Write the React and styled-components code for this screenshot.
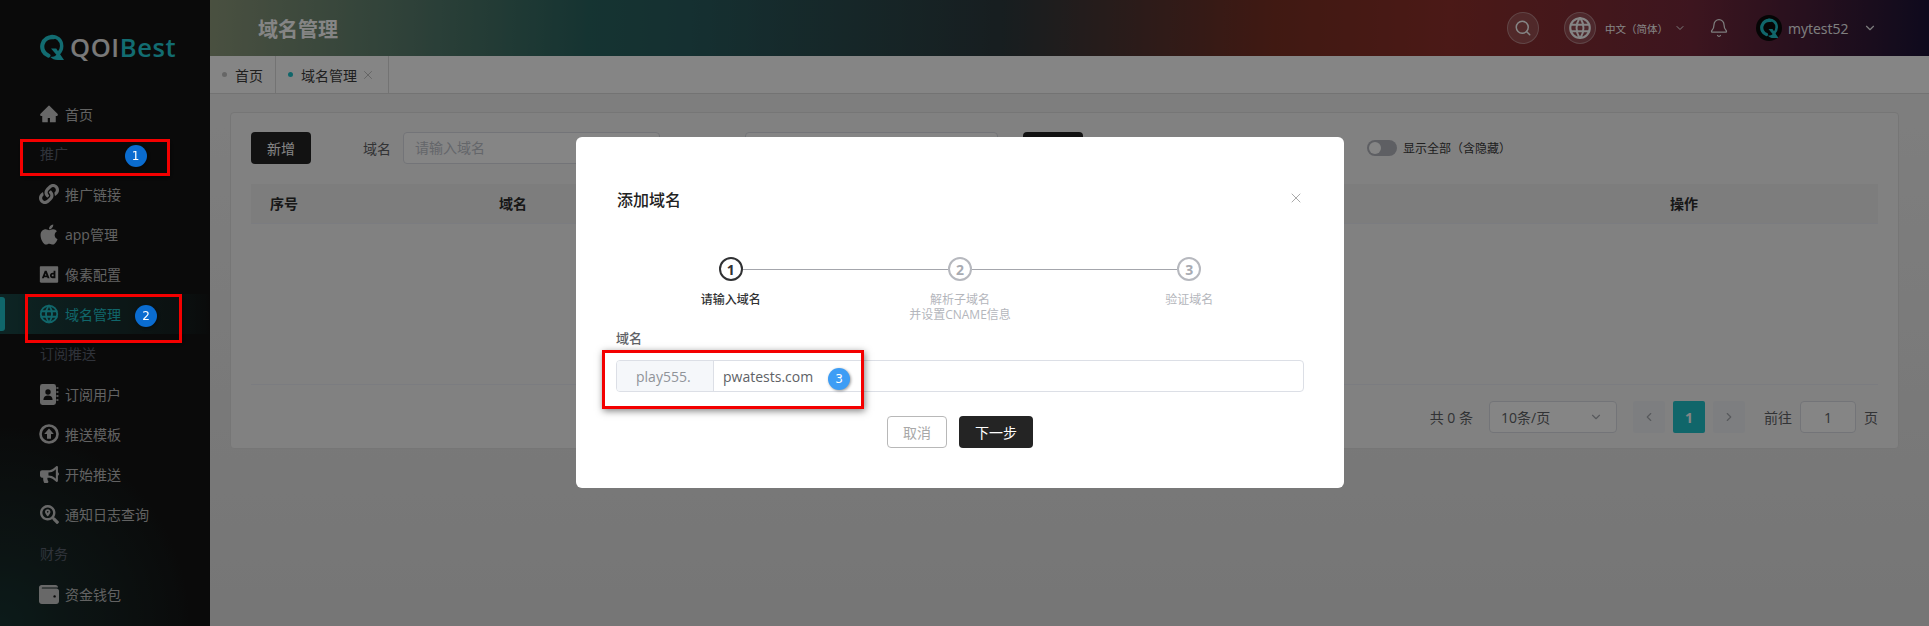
import React from 'react';
import styled, { createGlobalStyle } from 'styled-components';
import { Search, Bell, ChevronDown, ChevronLeft, ChevronRight, X } from 'lucide-react';
import { AiFillHome } from 'react-icons/ai';
import { FaLink, FaApple, FaBullhorn, FaSearchLocation } from 'react-icons/fa';
import { RiAdvertisementFill } from 'react-icons/ri';
import { TbWorld } from 'react-icons/tb';

const GlobalStyle = createGlobalStyle`
  html, body {
    margin: 0;
    height: 100%;
    overflow: hidden;
    background: #eee;
  }
  * {
    box-sizing: border-box;
  }
  body {
    font-family: "Open Sans", "Noto Sans CJK SC", sans-serif;
    font-size: 14px;
    color: #606266;
  }
`;

const Page = styled.div`
  display: flex;
  height: 626px;
  overflow: hidden;
`;

const Sidebar = styled.aside`
  width: 210px;
  flex: none;
  background:
    radial-gradient(ellipse 190px 200px at 0 100%, rgba(28, 88, 84, 0.45), transparent),
    #151515;
  overflow: hidden;
`;

const Logo = styled.div`
  display: flex;
  align-items: center;
  height: 94px;
  padding: 0 0 0 40px;
`;

const LogoText = styled.span`
  margin-left: 6px;
  font-family: "Open Sans", sans-serif;
  font-size: 25.5px;
  font-weight: 600;
  letter-spacing: 0.6px;
  color: #e8e8e8;

  b {
    font-weight: 600;
    color: #24d0d8;
  }
`;

const GroupLabel = styled.div`
  height: 40px;
  padding-left: 40px;
  line-height: 39px;
  font-size: 14px;
  color: #5c6270;
`;

const NavItem = styled.div`
  position: relative;
  display: flex;
  align-items: center;
  height: 40px;
  padding-left: 38px;
  gap: 5px;
  color: ${({ $active }) => ($active ? '#20c4cc' : '#bcbcbc')};
  background: ${({ $active }) =>
    $active ? 'linear-gradient(90deg, rgba(30, 120, 118, 0.5), rgba(30, 120, 118, 0.12) 85%, transparent)' : 'none'};

  &::before {
    content: ${({ $active }) => ($active ? '""' : 'none')};
    position: absolute;
    left: 0;
    top: 3px;
    width: 5px;
    height: 34px;
    border-radius: 0 3px 3px 0;
    background: #20c4cc;
  }
`;

const NavIcon = styled.span`
  display: flex;
  align-items: center;
  justify-content: center;
  width: 22px;
  height: 22px;
  font-size: ${({ $size }) => $size || 20}px;
  color: ${({ $active }) => ($active ? '#20c4cc' : '#c8c8c8')};
`;

const Main = styled.main`
  flex: 1;
  min-width: 0;
  display: flex;
  flex-direction: column;
`;

const Header = styled.header`
  display: flex;
  align-items: center;
  height: 56px;
  flex: none;
  padding: 0 52px 0 48px;
  background: linear-gradient(
    92deg,
    #8e9a7c 0%,
    #2a6460 22%,
    #2a5c5e 28%,
    #2c3a3e 46%,
    #7c3024 62%,
    #90302c 72%,
    #762a3c 86%,
    #1c1438 100%
  );
`;

const PageTitle = styled.h1`
  flex: 1;
  margin: 0;
  font-size: 20px;
  font-weight: 700;
  color: #fff;
`;

const RoundButton = styled.span`
  display: flex;
  align-items: center;
  justify-content: center;
  width: 32px;
  height: 32px;
  border-radius: 50%;
  background: rgba(255, 255, 255, 0.16);
  border: 1px solid rgba(255, 255, 255, 0.3);
  color: #fff;
  margin-right: ${({ $gap }) => $gap || 0}px;
`;

const LangText = styled.span`
  font-size: 10.5px;
  width: 60px;
  color: #fff;
  margin-right: 9px;
  white-space: nowrap;
`;

const HeaderIcon = styled.span`
  display: flex;
  color: #f0f0f0;
  margin-right: ${({ $gap }) => $gap || 0}px;
`;

const Avatar = styled.span`
  display: flex;
  align-items: center;
  justify-content: center;
  width: 26px;
  height: 26px;
  border-radius: 50%;
  background: #0a0a0a;
  margin-right: 6px;
`;

const UserName = styled.span`
  width: 75px;
  font-size: 14px;
  color: #f4f4f4;
`;

const Tabs = styled.nav`
  display: flex;
  height: 38px;
  flex: none;
  background: #fff;
  border-bottom: 1px solid #dcdcdc;
`;

const Tab = styled.div`
  display: flex;
  align-items: center;
  height: 37px;
  padding: 0 ${({ $closable }) => ($closable ? '13px' : '12px')} 0 12px;
  border-right: 1px solid #dcdcdc;
  color: #3c3c3c;
  font-size: 14px;
`;

const TabDot = styled.i`
  width: 5px;
  height: 5px;
  border-radius: 50%;
  margin-right: 8px;
  background: ${({ $active }) => ($active ? '#20c4cc' : '#c4c4c4')};
`;

const TabClose = styled.span`
  display: flex;
  margin-left: 4px;
  color: #a8a8a8;
`;

const Content = styled.section`
  flex: 1;
  padding: 18px 30px 0 20px;
  background: linear-gradient(180deg, #f2f2f2, #e2e2e2);
`;

const Card = styled.div`
  height: 337px;
  padding: 19px 20px;
  background: #f8f8f8;
  border: 1px solid #e2e2e2;
  border-radius: 4px;
`;

const Filters = styled.div`
  display: flex;
  align-items: center;
  height: 32px;
`;

const Button = styled.button`
  height: 32px;
  width: ${({ $w }) => $w || 60}px;
  margin: 0 0 0 ${({ $gap }) => $gap || 0}px;
  padding: 0;
  font: inherit;
  font-size: 14px;
  color: ${({ $plain }) => ($plain ? '#a8a8a8' : '#fff')};
  background: ${({ $plain }) => ($plain ? '#fff' : '#242424')};
  border: ${({ $plain }) => ($plain ? '1px solid #b8b8b8' : '0')};
  border-radius: 4px;
`;

const FilterLabel = styled.span`
  margin: 0 12px 0 ${({ $gap }) => $gap}px;
  color: #606266;
`;

const FilterInput = styled.div`
  width: ${({ $w }) => $w}px;
  height: 32px;
  padding: 0 11px;
  line-height: 30px;
  color: #c0c4cc;
  background: #fff;
  border: 1px solid #dcdfe6;
  border-radius: 4px;
`;

const Toggle = styled.span`
  display: flex;
  align-items: center;
  width: 30px;
  height: 16px;
  margin: 0 6px 0 284px;
  padding-left: 2px;
  border-radius: 8px;
  background: #b4b6be;

  &::before {
    content: "";
    width: 12px;
    height: 12px;
    border-radius: 50%;
    background: #fff;
  }
`;

const ToggleText = styled.span`
  font-size: 12px;
  white-space: nowrap;
  color: #3c3c3c;
`;

const TableHead = styled.div`
  display: grid;
  grid-template-columns: 229px 1171px 1fr;
  align-items: center;
  height: 40px;
  margin-top: 20px;
  padding: 0 0 2px 19px;
  font-weight: 700;
  font-size: 14px;
  color: #2c2c2c;
  background: #f0f0f0;
  border-bottom: 1px solid #ebeef5;
`;

const TableBody = styled.div`
  height: 161px;
  border-bottom: 1px solid #ebeef5;
`;

const Pagination = styled.div`
  display: flex;
  align-items: center;
  justify-content: flex-end;
  margin-top: 16px;
  height: 32px;
  color: #606266;
`;

const PageSize = styled.div`
  display: flex;
  align-items: center;
  justify-content: space-between;
  width: 128px;
  height: 32px;
  margin: 0 16px;
  padding: 0 13px 0 11px;
  border: 1px solid #dcdfe6;
  border-radius: 4px;
  background: #fff;
`;

const PageButton = styled.span`
  display: flex;
  align-items: center;
  justify-content: center;
  width: 32px;
  height: 32px;
  margin-right: 8px;
  border-radius: 2px;
  font-weight: 700;
  color: ${({ $active }) => ($active ? '#fff' : '#a8abb2')};
  background: ${({ $active }) => ($active ? '#20c4cc' : '#f0f2f5')};
`;

const GotoLabel = styled.span`
  margin-left: 11px;
`;

const GotoInput = styled.span`
  display: flex;
  align-items: center;
  justify-content: center;
  width: 56px;
  height: 32px;
  margin: 0 8px;
  border: 1px solid #dcdfe6;
  border-radius: 4px;
  background: #fff;
`;

const Overlay = styled.div`
  position: fixed;
  inset: 0;
  z-index: 10;
  padding: 137px 0 0 576px;
  background: rgba(0, 0, 0, 0.48);
`;

const Modal = styled.div`
  width: 768px;
  height: 351px;
  padding: 0 40px;
  border-radius: 6px;
  background: #fff;
`;

const ModalHead = styled.div`
  display: flex;
  align-items: center;
  justify-content: space-between;
  height: 22px;
  margin-top: 0;
  padding: 51px 0 0 1px;
  box-sizing: content-box;
`;

const ModalTitle = styled.h2`
  margin: 0;
  font-size: 16px;
  font-weight: 500;
  color: #222;
`;

const CloseIcon = styled.span`
  display: flex;
  margin: -2px 0 0 0;
  color: #8a8a8a;
`;

const Steps = styled.div`
  display: grid;
  grid-template-columns: repeat(3, 1fr);
  padding-top: 47px;
`;

const Step = styled.div`
  position: relative;
  display: flex;
  flex-direction: column;
  align-items: center;
  text-align: center;
  height: 66px;

  &:not(:last-child)::after {
    content: "";
    position: absolute;
    top: 11.5px;
    left: calc(50% + 12px);
    width: calc(100% - 24px);
    height: 1px;
    background: #a4a6ac;
  }
`;

const StepCircle = styled.span`
  display: flex;
  align-items: center;
  justify-content: center;
  width: 24px;
  height: 24px;
  border-radius: 50%;
  border: 2px solid ${({ $active }) => ($active ? '#303133' : '#b6b8be')};
  font-size: 14px;
  font-weight: 700;
  color: ${({ $active }) => ($active ? '#303133' : '#a8abb2')};
`;

const StepLabel = styled.div`
  margin-top: 11px;
  font-size: 12px;
  line-height: 15px;
  font-weight: ${({ $active }) => ($active ? 500 : 400)};
  color: ${({ $active }) => ($active ? '#303133' : '#b4b6bc')};
`;

const FieldLabel = styled.div`
  height: 20px;
  margin-top: 5px;
  line-height: 20px;
  font-size: 13px;
  font-weight: 500;
  color: #606266;
`;

const InputGroup = styled.div`
  display: flex;
  height: 32px;
  margin-top: 12px;
  border: 1px solid #dcdfe6;
  border-radius: 4px;
  overflow: hidden;
`;

const Addon = styled.span`
  display: flex;
  align-items: center;
  width: 97px;
  padding-left: 19px;
  background: #f5f7fa;
  border-right: 1px solid #dcdfe6;
  color: #909399;
`;

const InputValue = styled.span`
  display: flex;
  align-items: center;
  padding-left: 9px;
  color: #606266;
`;

const Actions = styled.div`
  display: flex;
  justify-content: center;
  gap: 12px;
  margin-top: 24px;
`;

const Marker = styled.div`
  position: fixed;
  z-index: 20;
  left: ${({ $x }) => $x}px;
  top: ${({ $y }) => $y}px;
  width: ${({ $w }) => $w}px;
  height: ${({ $h }) => $h}px;
  border: 3px solid #f40000;
  box-shadow: 1px 2px 7px rgba(0, 0, 0, 0.5);
`;

const Badge = styled.span`
  position: fixed;
  z-index: 21;
  left: ${({ $x }) => $x - 11}px;
  top: ${({ $y }) => $y - 11}px;
  display: flex;
  align-items: center;
  justify-content: center;
  width: 22px;
  height: 22px;
  border-radius: 50%;
  font-family: "DejaVu Sans", sans-serif;
  font-size: 12px;
  color: #fff;
  background: ${({ $light }) => ($light ? '#3d9df5' : '#0a6cd0')};
  box-shadow: 1px 1px 3px rgba(0, 0, 0, 0.4);
`;

function QMark({ size = 26, color = '#24d0d8' }) {
  return (
    <svg width={(size * 24) / 26} height={size} viewBox="0 0 24 26" fill="none">
      <path d="M13.6 3.2A9.6 9.6 0 0 0 8.4 21.6" stroke={color} strokeWidth="4.2" strokeLinecap="round" />
      <path d="M10.5 2.6c6-1 11.2 3.2 11.2 9.4 0 3-1.2 5.6-3.2 7.4" stroke={color} strokeWidth="3.4" />
      <path d="M11 14.4h5.2L24 26h-6.4c-3 0-5.4-1-7.2-3 3 0 4.8-.8 6-2.2z" fill={color} />
    </svg>
  );
}

function UploadRing() {
  return (
    <svg width="20" height="20" viewBox="0 0 20 20" fill="none">
      <circle cx="10" cy="10" r="8.5" stroke="currentColor" strokeWidth="2.6" />
      <path d="M10 4.6 14.8 10H12v4.8H8V10H5.2z" fill="currentColor" />
    </svg>
  );
}

function ContactBook() {
  return (
    <svg width="20" height="21" viewBox="0 0 20 21" fill="none">
      <path
        d="M3.4 0h11.2A2.4 2.4 0 0 1 17 2.4v16.2a2.4 2.4 0 0 1-2.4 2.4H3.4A2.4 2.4 0 0 1 1 18.6V2.4A2.4 2.4 0 0 1 3.4 0z"
        fill="currentColor"
      />
      <circle cx="9" cy="8" r="2.7" fill="#151515" />
      <path d="M4.4 16c0-3 2-4.4 4.6-4.4s4.6 1.4 4.6 4.4z" fill="#151515" />
      <path d="M17.4 4h2M17.4 8h2M17.4 12h2M17.4 16h2" stroke="currentColor" strokeWidth="1.6" />
    </svg>
  );
}

function Wallet() {
  return (
    <svg width="20" height="19" viewBox="0 0 20 19" fill="none">
      <path
        d="M2.6 0h13.8C18 0 19 1 19 2.4H3.4c-.9 0-.9 1.2 0 1.2h14.2c1.3 0 2.4 1.1 2.4 2.4v10.2c0 1.5-1.2 2.8-2.8 2.8H2.8C1.2 19 0 17.7 0 16.2V2.6C0 1.2 1.2 0 2.6 0z"
        fill="currentColor"
      />
      <circle cx="15.6" cy="11.4" r="1.2" fill="#151515" />
    </svg>
  );
}

const menu = [
  { label: '首页', icon: <AiFillHome /> },
  { group: '推广' },
  { label: '推广链接', icon: <FaLink />, size: 20 },
  { label: 'app管理', icon: <FaApple />, size: 23 },
  { label: '像素配置', icon: <RiAdvertisementFill />, size: 23 },
  { label: '域名管理', icon: <TbWorld />, size: 22, active: true },
  { group: '订阅推送' },
  { label: '订阅用户', icon: <ContactBook /> },
  { label: '推送模板', icon: <UploadRing /> },
  { label: '开始推送', icon: <FaBullhorn />, size: 19 },
  { label: '通知日志查询', icon: <FaSearchLocation />, size: 19 },
  { group: '财务' },
  { label: '资金钱包', icon: <Wallet /> },
];

const steps = [
  { n: 1, label: ['请输入域名'], active: true },
  { n: 2, label: ['解析子域名', '并设置CNAME信息'] },
  { n: 3, label: ['验证域名'] },
];

export default function App() {
  return (
    <>
      <GlobalStyle />
      <Page>
        <Sidebar>
          <Logo>
            <QMark />
            <LogoText>QOI<b>Best</b></LogoText>
          </Logo>
          {menu.map((item) =>
            item.group ? (
              <GroupLabel key={item.group}>{item.group}</GroupLabel>
            ) : (
              <NavItem key={item.label} $active={item.active}>
                <NavIcon $size={item.size} $active={item.active}>{item.icon}</NavIcon>
                {item.label}
              </NavItem>
            )
          )}
        </Sidebar>
        <Main>
          <Header>
            <PageTitle>域名管理</PageTitle>
            <RoundButton $gap={25}><Search size={18} /></RoundButton>
            <RoundButton $gap={9}><TbWorld size={26} /></RoundButton>
            <LangText>中文（简体）</LangText>
            <HeaderIcon $gap={23}><ChevronDown size={12} /></HeaderIcon>
            <HeaderIcon $gap={27}><Bell size={20} strokeWidth={1.5} /></HeaderIcon>
            <Avatar><QMark size={20} color="#20c4cc" /></Avatar>
            <UserName>mytest52</UserName>
            <HeaderIcon><ChevronDown size={14} /></HeaderIcon>
          </Header>
          <Tabs>
            <Tab>
              <TabDot />
              首页
            </Tab>
            <Tab $closable>
              <TabDot $active />
              域名管理
              <TabClose><X size={14} strokeWidth={1.2} /></TabClose>
            </Tab>
          </Tabs>
          <Content>
            <Card>
              <Filters>
                <Button>新增</Button>
                <FilterLabel $gap={52}>域名</FilterLabel>
                <FilterInput $w={257}>请输入域名</FilterInput>
                <FilterLabel $gap={45}>状态</FilterLabel>
                <FilterInput $w={253} />
                <Button $gap={25}>查询</Button>
                <Toggle />
                <ToggleText>显示全部（含隐藏）</ToggleText>
              </Filters>
              <TableHead>
                <span>序号</span>
                <span>域名</span>
                <span>操作</span>
              </TableHead>
              <TableBody />
              <Pagination>
                <span>共 0 条</span>
                <PageSize>
                  10条/页
                  <ChevronDown size={14} color="#a8abb2" />
                </PageSize>
                <PageButton><ChevronLeft size={14} /></PageButton>
                <PageButton $active>1</PageButton>
                <PageButton><ChevronRight size={14} /></PageButton>
                <GotoLabel>前往</GotoLabel>
                <GotoInput>1</GotoInput>
                <span>页</span>
              </Pagination>
            </Card>
          </Content>
        </Main>
      </Page>
      <Overlay>
        <Modal>
          <ModalHead>
            <ModalTitle>添加域名</ModalTitle>
            <CloseIcon><X size={16} strokeWidth={1.1} /></CloseIcon>
          </ModalHead>
          <Steps>
            {steps.map((step) => (
              <Step key={step.n}>
                <StepCircle $active={step.active}>{step.n}</StepCircle>
                <StepLabel $active={step.active}>
                  {step.label.map((line) => (
                    <div key={line}>{line}</div>
                  ))}
                </StepLabel>
              </Step>
            ))}
          </Steps>
          <FieldLabel>域名</FieldLabel>
          <InputGroup>
            <Addon>play555.</Addon>
            <InputValue>pwatests.com</InputValue>
          </InputGroup>
          <Actions>
            <Button $plain>取消</Button>
            <Button $w={74}>下一步</Button>
          </Actions>
        </Modal>
      </Overlay>
      <Marker $x={20} $y={139} $w={150} $h={37} />
      <Marker $x={25} $y={294} $w={157} $h={49} />
      <Marker $x={602} $y={350} $w={262} $h={59} />
      <Badge $x={135.5} $y={156}>1</Badge>
      <Badge $x={146} $y={316}>2</Badge>
      <Badge $x={839} $y={379} $light>3</Badge>
    </>
  );
}
